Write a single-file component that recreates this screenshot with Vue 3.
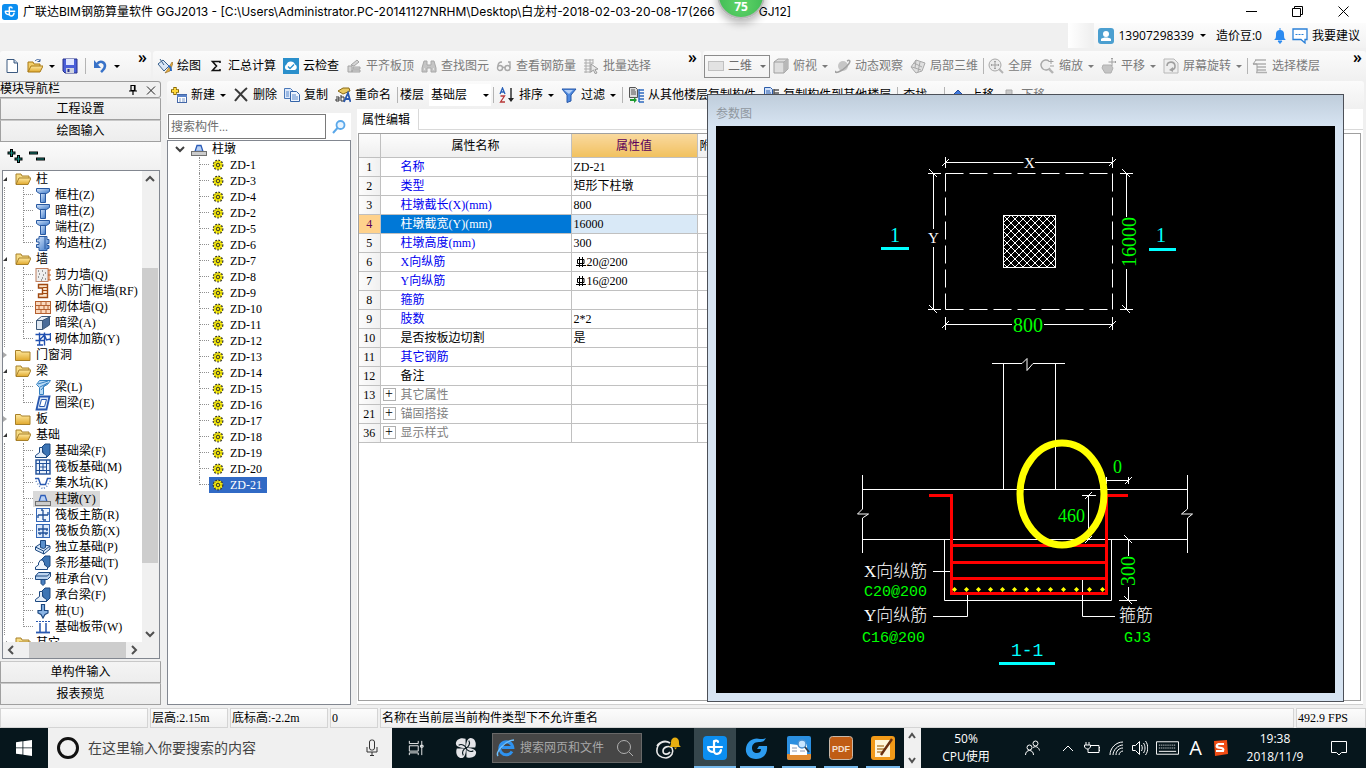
<script setup>
import { ref } from 'vue'

const quickTools = [
  { icon: 'new' },
  { icon: 'open', arrow: true },
  { icon: 'save', sep: true },
  { icon: 'undo', arrow: true }
]

const editTools = [
  { icon: 'paint', label: '绘图' },
  { icon: 'sigma', label: '汇总计算' },
  { icon: 'cloud', label: '云检查' },
  { icon: 'align', label: '平齐板顶', off: true },
  { icon: 'binoculars', label: '查找图元', off: true },
  { icon: 'glasses', label: '查看钢筋量', off: true },
  { icon: 'batch', label: '批量选择', off: true }
]

const viewTools = [
  { icon: 'cube', label: '俯视', arrow: true },
  { icon: 'orbit', label: '动态观察' },
  { icon: 'local3d', label: '局部三维', sep: true },
  { icon: 'full', label: '全屏' },
  { icon: 'zoom', label: '缩放', arrow: true },
  { icon: 'pan', label: '平移', arrow: true },
  { icon: 'rotate', label: '屏幕旋转', arrow: true, sep: true },
  { icon: 'floors', label: '选择楼层' }
]

const componentTools = [
  { icon: 'add', label: '新建', arrow: true },
  { icon: 'delete', label: '删除' },
  { icon: 'copy', label: '复制' },
  { icon: 'rename', label: '重命名', sep: true }
]

const listTools = [
  { icon: 'sort', label: '排序', arrow: true },
  { icon: 'filter', label: '过滤', arrow: true, sep: true },
  { icon: 'copyfrom', label: '从其他楼层复制构件' },
  { icon: 'copyto', label: '复制构件到其他楼层', sep: true },
  { label: '查找', arrow: true, sep: true },
  { icon: 'up', label: '上移' },
  { icon: 'down', label: '下移', off: true }
]

const modules = ref([
  {
    name: '柱', open: true, items: [
      { icon: 'col', name: '框柱(Z)' },
      { icon: 'col', name: '暗柱(Z)' },
      { icon: 'col', name: '端柱(Z)' },
      { icon: 'gzz', name: '构造柱(Z)' }
    ]
  },
  {
    name: '墙', open: true, items: [
      { icon: 'shear', name: '剪力墙(Q)' },
      { icon: 'doorwall', name: '人防门框墙(RF)' },
      { icon: 'brick', name: '砌体墙(Q)' },
      { icon: 'hidbeam', name: '暗梁(A)' },
      { icon: 'brickbar', name: '砌体加筋(Y)' }
    ]
  },
  { name: '门窗洞', open: false, items: [] },
  {
    name: '梁', open: true, items: [
      { icon: 'beam', name: '梁(L)' },
      { icon: 'ring', name: '圈梁(E)' }
    ]
  },
  { name: '板', open: false, items: [] },
  {
    name: '基础', open: true, items: [
      { icon: 'fbeam', name: '基础梁(F)' },
      { icon: 'raft', name: '筏板基础(M)' },
      { icon: 'pit', name: '集水坑(K)' },
      { icon: 'pier', name: '柱墩(Y)' },
      { icon: 'mainbar', name: '筏板主筋(R)' },
      { icon: 'negbar', name: '筏板负筋(X)' },
      { icon: 'isolated', name: '独立基础(P)' },
      { icon: 'strip', name: '条形基础(T)' },
      { icon: 'cap', name: '桩承台(V)' },
      { icon: 'fbeam', name: '承台梁(F)' },
      { icon: 'pile', name: '桩(U)' },
      { icon: 'band', name: '基础板带(W)' }
    ]
  },
  { name: '其它', open: true, items: [] }
])
const activeModule = ref('柱墩(Y)')

const components = [1, 3, 4, 2, 5, 6, 7, 8, 9, 10, 11, 12, 13, 14, 15, 16, 17, 18, 19, 20, 21].map((n) => 'ZD-' + n)
const activeComponent = ref('ZD-21')

const rows = [
  { no: 1, name: '名称', value: 'ZD-21', kind: 'key' },
  { no: 2, name: '类型', value: '矩形下柱墩', kind: 'key' },
  { no: 3, name: '柱墩截长(X)(mm)', value: '800', kind: 'key' },
  { no: 4, name: '柱墩截宽(Y)(mm)', value: '16000', kind: 'key' },
  { no: 5, name: '柱墩高度(mm)', value: '300', kind: 'key' },
  { no: 6, name: 'X向纵筋', value: '20@200', rebar: true, kind: 'key' },
  { no: 7, name: 'Y向纵筋', value: '16@200', rebar: true, kind: 'key' },
  { no: 8, name: '箍筋', value: '', kind: 'key' },
  { no: 9, name: '肢数', value: '2*2', kind: 'key' },
  { no: 10, name: '是否按板边切割', value: '是', kind: 'plain' },
  { no: 11, name: '其它钢筋', value: '', kind: 'key' },
  { no: 12, name: '备注', value: '', kind: 'plain' },
  { no: 13, name: '其它属性', value: '', kind: 'group' },
  { no: 21, name: '锚固搭接', value: '', kind: 'group' },
  { no: 36, name: '显示样式', value: '', kind: 'group' }
]
const activeRow = ref(4)

const rebarDots = [954, 966, 978, 990, 1002, 1014, 1026, 1038, 1050, 1063, 1076, 1089, 1102]

const taskApps = [
  { icon: 'ggj', active: true, title: '广联达' },
  { icon: 'gbrowser', title: '浏览器' },
  { icon: 'reader', title: '阅读器' },
  { icon: 'pdf', title: 'PDF' },
  { icon: 'notes', title: '便签' }
]
</script>

<template>
  <svg class="sprite" aria-hidden="true">
    <defs>
      <linearGradient id="gBlue" x1="0" y1="0" x2="1" y2="1"><stop offset="0" stop-color="#d6e6fb" /><stop offset="1" stop-color="#3c78c8" /></linearGradient>
      <linearGradient id="gFolder" x1="0" y1="0" x2="0" y2="1"><stop offset="0" stop-color="#ffe9a0" /><stop offset="1" stop-color="#e0a82c" /></linearGradient>
    </defs>
    <symbol id="i-ggj" viewBox="0 0 24 24"><rect width="24" height="24" rx="4" fill="#0c8ef0" /><path d="M11 5v10c0 4 6 4 7-1M11 7c0-3 4-3 4-1M5 11h14M5 11c0 3 2 5 6 5" fill="none" stroke="#fff" stroke-width="2.200" stroke-linecap="round" /></symbol>
    <symbol id="i-new" viewBox="0 0 16 16"><path d="M3 1.500h7l3.500 3.500v9.500H3z" fill="#fff" stroke="#3c5a80" /><path d="M10 1.500V5h3.500" fill="#c4d4e8" stroke="#3c5a80" /></symbol>
    <symbol id="i-open" viewBox="0 0 16 16"><path d="M1 14V4h5l1 2h6v3" fill="#f3cf6a" stroke="#a87814" /><path d="M1 14l3-6h12l-3 6z" fill="url(#gFolder)" stroke="#a87814" /><path d="M8 3c2-2 4-2 5 0m0-2v2.500h-2.500" fill="none" stroke="#3a5f9a" /></symbol>
    <symbol id="i-save" viewBox="0 0 16 16"><path d="M1 1h14v14H3l-2-2z" fill="#4a5fd8" stroke="#26308a" /><path d="M4 1h8v6H4z" fill="#dfe6ff" /><path d="M4 10h8v5H4z" fill="#d0d4e0" /><path d="M5.500 11h2v3h-2z" fill="#26308a" /></symbol>
    <symbol id="i-undo" viewBox="0 0 16 16"><path d="M5 6c3-4 8-2 8 2 0 3-2 4-4 6" fill="none" stroke="#3872c8" stroke-width="2.600" /><path d="M2 2v8h7z" fill="#3872c8" /></symbol>
    <symbol id="i-paint" viewBox="0 0 16 16"><path d="M1 6l5-4 6 6-5 5z" fill="#dbe7f6" stroke="#38608c" /><path d="M3 1l4 6" stroke="#38608c" fill="none" /><path d="M15 4l-4 7-3 4 5-2 3-8z" fill="#e8b040" stroke="#8a6018" stroke-width=".6" /><path d="M11 8c2 0 3 2 3 5" stroke="#2868c0" stroke-width="2" fill="none" /></symbol>
    <symbol id="i-sigma" viewBox="0 0 16 16"><path d="M12 5V3.500H4.500L8.500 8l-4 4.500H12V11" fill="none" stroke="#111" stroke-width="1.600" /></symbol>
    <symbol id="i-cloud" viewBox="0 0 16 16"><rect width="16" height="16" fill="#2a8fcb" /><path d="M4 12a3 3 0 0 1-.5-5.500 4.500 4.500 0 0 1 8.500 0A3 3 0 0 1 12 12z" fill="#fff" /><path d="M5 8.500l2 2 4-4" fill="none" stroke="#2a8fcb" stroke-width="1.300" /></symbol>
    <symbol id="i-align" viewBox="0 0 16 16"><path d="M5 7l6-5 2 2-5 4zM2 8h4v6H2zM7 9h7v2H7zM6 12h8v2H6z" fill="#d4d4d4" stroke="#a4a4a4" /></symbol>
    <symbol id="i-binoculars" viewBox="0 0 16 16"><path d="M3 3h3v4h4V3h3l2 7v4h-5v-4H6v4H1v-4z" fill="#c4c4c4" stroke="#a8a8a8" /><path d="M3 11h1M12 11h1" stroke="#fff" /></symbol>
    <symbol id="i-glasses" viewBox="0 0 16 16"><g fill="none" stroke="#a8a8a8" stroke-width="1.400"><circle cx="4" cy="10" r="2.500" /><circle cx="11.500" cy="10" r="2.500" /><path d="M2 8c0-3 2-4 4-4M6.500 10c1-1 1.500-1 2.500 0M14 10V4h-2" /></g></symbol>
    <symbol id="i-batch" viewBox="0 0 16 16"><path d="M1 2h9M1 5h9M1 8h7M1 11h7M1 14h7M3 1v14M7 1v14M10 1v5" stroke="#adadad" fill="none" /><path d="M8 6l7 5-3 .5 2 3.500-2 .5-1.500-3.500L8 14z" fill="#e8e8e8" stroke="#9c9c9c" /></symbol>
    <symbol id="i-flat" viewBox="0 0 16 16"><rect x=".5" y="3.500" width="15" height="9" fill="#e2e2e2" stroke="#c0c0c0" /></symbol>
    <symbol id="i-cube" viewBox="0 0 16 16"><path d="M1 4l4-3h10v10l-4 4H1z" fill="#dedede" stroke="#a0a0a0" /><path d="M1 4h10v11M11 4l4-3" stroke="#a0a0a0" fill="none" /><path d="M11 4l4-3v10l-4 4z" fill="#b8b8b8" /></symbol>
    <symbol id="i-orbit" viewBox="0 0 16 16"><circle cx="8" cy="8" r="5" fill="#c6c6c6" /><path d="M1 13c-2 3 5 1 10-4s5-8 1-6" fill="none" stroke="#a0a0a0" stroke-width="1.500" /></symbol>
    <symbol id="i-local3d" viewBox="0 0 16 16"><path d="M1 9l5-7 9 3-3 8-6 2z" fill="#e0e0e0" stroke="#a8a8a8" /><path d="M4 5l8 4M6 2l-1 8M10 4l-2 10M2 9l9 3" stroke="#a8a8a8" fill="none" /></symbol>
    <symbol id="i-full" viewBox="0 0 16 16"><circle cx="7" cy="7" r="6" fill="#ececec" stroke="#a8a8a8" /><path d="M7 3v8M3 7h8M6 4l1-1 1 1M6 10l1 1 1-1M4 6L3 7l1 1M10 6l1 1-1 1" stroke="#a0a0a0" fill="none" /><path d="M11 11l4 4" stroke="#b4b4b4" stroke-width="2" /></symbol>
    <symbol id="i-zoom" viewBox="0 0 16 16"><path d="M10 3a5 5 0 1 0 1 7" fill="#eee" stroke="#a8a8a8" stroke-width="1.400" /><path d="M12 1v5M9.500 3.500h5M11 8h4" stroke="#a0a0a0" /><path d="M10 11l4 4" stroke="#b4b4b4" stroke-width="2.400" /></symbol>
    <symbol id="i-pan" viewBox="0 0 16 16"><path d="M2 7h8l2 3-2 5H4l-3-5z" fill="#c4c4c4" stroke="#b0b0b0" /><path d="M11 0v8M7.500 4h7M10 1l1-1 1 1M14 3l1 1-1 1" stroke="#a0a0a0" fill="none" /></symbol>
    <symbol id="i-rotate" viewBox="0 0 16 16"><path d="M1 1h10l4 4v10H1z" fill="#eee" stroke="#b8b8b8" /><path d="M4 8a4 4 0 1 1 5 4" stroke="#a0a0a0" stroke-width="1.600" fill="none" /><path d="M6 12l4-3v5z" fill="#a0a0a0" /></symbol>
    <symbol id="i-floors" viewBox="0 0 16 16"><path d="M3 2h11M1 6h4M5 6h9M5 9h9M5 12h9M4 14.500h11" stroke="#b0b0b0" stroke-width="1.500" /><path d="M4 2L1 6h4v8" stroke="#a0a0a0" fill="none" /></symbol>
    <symbol id="i-add" viewBox="0 0 16 16"><path d="M4 0v8M0 4h8" stroke="#8a6a00" stroke-width="3.400" /><path d="M4 1v6M1 4h6" stroke="#ffd83c" stroke-width="2" /><rect x="6.500" y="7.500" width="9" height="8" fill="#fff" stroke="#4468a8" /><path d="M6 8h10v2H6z" fill="#5b83c8" /><path d="M8 12h2m1 0h3m-6 2h2m1 0h3" stroke="#7a98c8" /></symbol>
    <symbol id="i-delete" viewBox="0 0 16 16"><path d="M2 2c4 3 8 8 12 12M14 1C9 5 6 9 2 14" stroke="#3a3a3a" stroke-width="2" fill="none" /></symbol>
    <symbol id="i-copy" viewBox="0 0 16 16"><path d="M.5 1.500h6l2 2v8h-8z" fill="#dce8fa" stroke="#4a78b8" /><path d="M6.500 4.500h6l3 3v7h-9z" fill="#eef4fd" stroke="#3464a8" /><path d="M2 5h3M2 7h3M2 9h3M8 8h4M8 10h6M8 12h6" stroke="#5a8acc" /></symbol>
    <symbol id="i-rename" viewBox="0 0 16 16"><path d="M3 4l5-3h6l1 3-7 3z" fill="#e8c860" stroke="#8a6a18" /><path d="M1 10h3v4H1v-2h3M6 8v6h3v-4H6" fill="none" stroke="#333" /><path d="M9 15l4-9 2.500 9M10.500 12h4" fill="none" stroke="#2858b0" stroke-width="1.800" /></symbol>
    <symbol id="i-sort" viewBox="0 0 16 16"><path d="M1 7l2.500-6L6 7M2 5h3" stroke="#2860b8" fill="none" stroke-width="1.300" /><path d="M1.500 9h4l-4 6H6" stroke="#b83838" fill="none" stroke-width="1.300" /><path d="M12 1v12" stroke="#222" stroke-width="1.400" /><path d="M9 11h6l-3 4z" fill="#222" /></symbol>
    <symbol id="i-filter" viewBox="0 0 16 16"><path d="M1 2h14L10 8v6l-4 1.500V8z" fill="#4e8ae0" stroke="#2858a8" /><path d="M3 3h9L8 7z" fill="#b4d0f8" /></symbol>
    <symbol id="i-copyfrom" viewBox="0 0 16 16"><path d="M1.500.5h6l2 2v8h-8z" fill="#ddd" stroke="#555" /><path d="M3 3h4M3 5h5M3 7h5" stroke="#555" /><path d="M11 2v13M11 3h5M11 6h5M11 9h5M11 12h5M11 15h5" stroke="#2f6bc0" stroke-width="1.500" /><path d="M2 12h4v-2l3 3-3 3v-2H2z" fill="#1d9a30" /></symbol>
    <symbol id="i-copyto" viewBox="0 0 16 16"><path d="M1.500.5h6l2 2v10h-8z" fill="#cfe0fa" stroke="#2c5ca8" /><path d="M3 4h4M3 6h5M3 8h5" stroke="#2c5ca8" /><path d="M11 2v13M11 3h5M11 6h5M11 9h5" stroke="#555" stroke-width="1.500" /></symbol>
    <symbol id="i-up" viewBox="0 0 16 16"><path d="M8 3l6 6h-3v5H5V9H2z" fill="#3f78dc" stroke="#244c9c" /></symbol>
    <symbol id="i-down" viewBox="0 0 16 16"><path d="M8 14l6-6h-3V3H5v5H2z" fill="#c8c8c8" stroke="#aaa" /></symbol>
    <symbol id="i-folder-open" viewBox="0 0 16 16"><path d="M1 13V3h5l1 2h7v3" fill="#f6dc86" stroke="#a88028" /><path d="M1 13.500L4 7h12l-3 6.500z" fill="url(#gFolder)" stroke="#a88028" /></symbol>
    <symbol id="i-folder" viewBox="0 0 16 16"><path d="M.5 13.500V3.500h5l1 1.500h8.500v8.500z" fill="url(#gFolder)" stroke="#a88028" /></symbol>
    <symbol id="i-col" viewBox="0 0 16 16"><path d="M1.500 1.500h13v3l-3 2h-7l-3-2z" fill="url(#gBlue)" stroke="#2858a0" /><path d="M5.500 6.500h5v9h-5z" fill="url(#gBlue)" stroke="#2858a0" /></symbol>
    <symbol id="i-gzz" viewBox="0 0 16 16"><path d="M4 1.500h8v3h2v4h-2v2h2v3h-2v2H4v-3H1.500v-3H4V7H1.500V4H4z" fill="url(#gBlue)" stroke="#2858a0" /><path d="M10 2v12" stroke="#2858a0" /></symbol>
    <symbol id="i-shear" viewBox="0 0 16 16"><rect x="1" y="1.500" width="12" height="13" fill="#eee" stroke="#c08060" /><path d="M3 4h1m3 0h1m2 2h1M4 7h1m3 1h1M3 10h1m3 1h1m2 1h1M6 13h1" stroke="#444" /><path d="M14 3v10M13 3h3M13 8h3M13 13h3" stroke="#c86020" /></symbol>
    <symbol id="i-doorwall" viewBox="0 0 16 16"><path d="M3.500 1.500h9v13h-9v-3.500h4V5h-4z" fill="#fbe4cc" stroke="#a04810" stroke-width="1.400" /><path d="M8 4.500h4M8 7.500h4M8 10.500h4" stroke="#a04810" /></symbol>
    <symbol id="i-brick" viewBox="0 0 16 16"><rect x=".5" y="2.500" width="15" height="12" fill="#fbd9be" stroke="#b46030" /><path d="M1 6.500h14M1 10.500h14M6 3v3M11 3v3M4 7v3M9 7v3M13 7v3M6 11v3M11 11v3" stroke="#b46030" /></symbol>
    <symbol id="i-hidbeam" viewBox="0 0 16 16"><path d="M1.500 5.500l5-4h9l-5 4z" fill="#e8eef6" stroke="#3c5878" /><path d="M1.500 5.500h6v9h-6z" fill="#dfe8f2" stroke="#3c5878" /><path d="M7.500 5.500l7-3.500v8l-7 4.500z" fill="#4a6c98" stroke="#3c5878" /></symbol>
    <symbol id="i-brickbar" viewBox="0 0 16 16"><path d="M.5 3.500h15M.5 9.500h9M4.500 1.500v13M9.500 1.500v13M4.500 9l5-5 2 5 4-1M15.500 2v8M2 14h6" fill="none" stroke="#2050b0" stroke-width="1.400" /></symbol>
    <symbol id="i-beam" viewBox="0 0 16 16"><path d="M1.500 5.500l3-4h11l-3 4-4 2v8h-4v-7z" fill="#b8daf6" stroke="#3480c0" /><path d="M3 5l10-3M5 8l8-4M6 11l6-7" stroke="#3480c0" /></symbol>
    <symbol id="i-ring" viewBox="0 0 16 16"><path d="M4.500 1.500h10l-3 13h-10z" fill="#dce8f8" stroke="#2858b0" stroke-width="1.800" /><path d="M6.500 4.500h5l-2 7h-5z" fill="#fff" stroke="#2858b0" /></symbol>
    <symbol id="i-fbeam" viewBox="0 0 16 16"><path d="M6 5l4-4h5v10l-4 4z" fill="#3c74b4" stroke="#1c4880" /><path d="M.5 14.500v-2l4-3V4.500h3v5l4 3v2z" fill="#e4eefa" stroke="#1c4880" /></symbol>
    <symbol id="i-raft" viewBox="0 0 16 16"><rect x="1" y="1" width="14" height="14" fill="#eaf2fc" stroke="#1f4f98" stroke-width="1.400" /><path d="M4.500 1v14M8 4v8M11.500 1v14M1 4.500h14M4 8h8M1 11.500h14" stroke="#1f4f98" /></symbol>
    <symbol id="i-pit" viewBox="0 0 16 16"><path d="M0 3.500h3.500l2 6h5l2-6H16" fill="none" stroke="#2858b0" stroke-width="1.400" /><path d="M1 6l3 5 4 3 4-3 3-5" fill="none" stroke="#5a80c0" stroke-width="1.500" stroke-dasharray="1 2" /></symbol>
    <symbol id="i-pier" viewBox="0 0 16 16"><path d="M6 4.500h4l2 6H4z" fill="#b8d0f4" stroke="#2c5cb8" stroke-width="1.300" /><rect x=".5" y="10.500" width="15" height="4" fill="#ccc" stroke="#707070" /></symbol>
    <symbol id="i-mainbar" viewBox="0 0 16 16"><rect x="1.500" y="1.500" width="13" height="13" fill="#f0f6fe" stroke="#3468b8" /><path d="M8 3v10M3 8h10M3 8v3M13 8V5M8 3H6M8 13h3" stroke="#1f4f98" fill="none" stroke-width="1.300" /></symbol>
    <symbol id="i-negbar" viewBox="0 0 16 16"><rect x="1.500" y="1.500" width="13" height="13" fill="#dce9fa" stroke="#3468b8" /><path d="M8 2v12M3 6h10M3 10h10M4 6v2M12 6v2M5 10v2M11 10v2" stroke="#1f4f98" fill="none" stroke-width="1.300" /></symbol>
    <symbol id="i-isolated" viewBox="0 0 16 16"><path d="M.5 8L5 5l10 2v3l-6 5-8.500-4z" fill="#d6e6f8" stroke="#1c4880" /><path d="M5.500 1.500h5v7l-2 1-3-1z" fill="#5a90cc" stroke="#1c4880" /><path d="M.5 8l8 4 6.500-5M8.500 12v3" stroke="#1c4880" fill="none" /></symbol>
    <symbol id="i-strip" viewBox="0 0 16 16"><path d="M6 5l4-4h5v10l-4 3z" fill="#3c74b4" stroke="#1c4880" /><path d="M.5 14.500V12l3-2V8l2-3h2l2 3v2l3 2v2.500z" fill="#eef4fc" stroke="#1c4880" /></symbol>
    <symbol id="i-cap" viewBox="0 0 16 16"><path d="M.5 5l3-3.500h12v4l-3 3H.5z" fill="#bcd4f0" stroke="#1c4880" /><path d="M.5 5h12l3-3.500" fill="none" stroke="#1c4880" /><path d="M6 8.500h4v4l-2 2-2-2z" fill="#4a80c0" stroke="#1c4880" /></symbol>
    <symbol id="i-pile" viewBox="0 0 16 16"><path d="M6.500 1.500h3v6H13v2.500l-3 1.500L8 15l-2-3.500L3 10V7.500h3.500z" fill="#8ab4e4" stroke="#1c4880" stroke-width="1.200" /></symbol>
    <symbol id="i-band" viewBox="0 0 16 16"><path d="M1 2.500h14" stroke="#2858b0" stroke-dasharray="2 1" /><path d="M1 13.500h14" stroke="#2858b0" stroke-width="1.800" /><path d="M5 4v9M11 4v9" stroke="#2858b0" stroke-width="1.500" /></symbol>
    <symbol id="i-gear" viewBox="0 0 12 12"><circle cx="6" cy="6" r="4.800" fill="#fff200" stroke="#333" stroke-width="1.200" stroke-dasharray="1.800 1.400" /><path d="M6 2v8M2 6h8M3.200 3.200l5.600 5.600M8.800 3.200L3.200 8.800" stroke="#555" stroke-width=".5" /><circle cx="6" cy="6" r="1.600" fill="#fff200" stroke="#222" stroke-width=".8" /></symbol>
    <symbol id="i-rebar" viewBox="0 0 12 12"><path d="M4.500 1v10M7.500 1v10M4.500 3.500h-2v4h6.500v-4H4.500M1 9.500h10" fill="none" stroke="#000" /></symbol>
    <symbol id="i-gbrowser" viewBox="0 0 24 24"><path d="M21 2c-2 4-4 4-7 4-5 0-7 3-7 6s2 5 5 5c2 0 4-1 4-4h-4l2-3h8c1 8-4 13-11 13C4 23 0 18 1 12 2 5 9 1 15 3c3 0 4 0 6-1z" fill="#2c9cf0" /></symbol>
    <symbol id="i-reader" viewBox="0 0 24 24"><rect width="24" height="24" rx="2" fill="#2b8fe0" /><path d="M0 18h24v4a2 2 0 0 1-2 2H2a2 2 0 0 1-2-2z" fill="#e08a30" /><path d="M3 8l8 1 9-1v11H3z" fill="#fff" /><path d="M5 12h5M5 15h5M13 15h5" stroke="#8a98b0" /><circle cx="15" cy="8" r="4" fill="#c8e6ff" stroke="#4a90d0" stroke-width="1.500" /><path d="M18 11l4 5" stroke="#345" stroke-width="2" /></symbol>
    <symbol id="i-pdf" viewBox="0 0 24 24"><rect x=".5" y=".5" width="23" height="23" rx="3" fill="#c05c14" stroke="#c8b8a8" /><text x="12" y="16" text-anchor="middle" font-family="Liberation Sans" font-weight="bold" font-size="9" fill="#f4e0d0">PDF</text></symbol>
    <symbol id="i-notes" viewBox="0 0 24 24"><rect width="24" height="24" rx="3" fill="#f29a18" /><rect x="4" y="4" width="15" height="17" fill="#fff7dc" /><path d="M6 10h7M6 13h8M6 16h6" stroke="#b88840" stroke-width="1.500" /><path d="M21 3l-9 13-2 3" stroke="#6a3010" stroke-width="2.400" /></symbol>
  </svg>

  <div class="app">
    <header class="titlebar">
      <svg class="logo"><use href="#i-ggj" /></svg>
      <h1>
        <span>广联达BIM钢筋算量软件 GGJ2013 - [C:\Users\Administrator.PC-20141127NRHM\Desktop\白龙村-2018-02-03-20-08-17(266</span>
        <span>GJ12]</span>
      </h1>
      <div class="window-buttons">
        <button aria-label="最小化"><svg viewBox="0 0 11 11"><path d="M0 5.500h11" /></svg></button>
        <button aria-label="还原"><svg viewBox="0 0 11 11"><path d="M.5 2.500h8v8h-8zM2.500 2.500v-2h8v8h-2" /></svg></button>
        <button aria-label="关闭"><svg viewBox="0 0 11 11"><path d="M.5.5l10 10M10.500.5l-10 10" /></svg></button>
      </div>
      <div class="speed-ball">75</div>
    </header>

    <div class="account-row">
      <div class="account-stub"></div>
      <div class="account">
        <svg class="ico" viewBox="0 0 16 16"><rect width="16" height="16" rx="3" fill="#4b9fd0" /><circle cx="8" cy="6" r="3" fill="#fff" /><path d="M3 13v-2c2-2 8-2 10 0v2z" fill="#fff" /></svg>
        <button class="account-name">13907298339<i class="caret"></i></button>
        <span class="beans">造价豆:0</span>
        <svg class="ico" viewBox="0 0 16 16"><path d="M2 12c2-1 2-3 2-6a4 4 0 0 1 8 0c0 3 0 5 2 6z" fill="#2b8af0" /><path d="M8 0v3M6 13h4l-2 2.500z" fill="#2b8af0" stroke="#2b8af0" /></svg>
        <svg class="ico" viewBox="0 0 16 16"><path d="M1 1h14v10.500h-2V15l-4-3.500H1z" fill="#fff" stroke="#2a80d8" stroke-width="1.300" /><path d="M3.500 6.500h9" stroke="#2a80d8" stroke-dasharray="2 1" /></svg>
        <button>我要建议</button>
      </div>
    </div>

    <nav class="toolbars">
      <div class="bar bar-quick">
        <template v-for="t in quickTools" :key="t.icon">
          <button class="tool" :aria-label="t.icon"><svg class="ico"><use :href="'#i-' + t.icon" /></svg><i v-if="t.arrow" class="caret"></i></button>
          <span v-if="t.sep" class="sep"></span>
        </template>
        <button class="more">»</button>
      </div>
      <div class="bar bar-edit">
        <button v-for="t in editTools" :key="t.label" class="tool" :class="{ off: t.off }"><svg class="ico"><use :href="'#i-' + t.icon" /></svg>{{ t.label }}</button>
        <button class="more">»</button>
      </div>
      <div class="bar bar-view">
        <label class="mode">
          <svg class="ico"><use href="#i-flat" /></svg>
          <select aria-label="视图"><option>二维</option><option>三维</option></select>
          <i class="caret"></i>
        </label>
        <template v-for="t in viewTools" :key="t.label">
          <button class="tool off"><svg class="ico"><use :href="'#i-' + t.icon" /></svg>{{ t.label }}<i v-if="t.arrow" class="caret"></i></button>
          <span v-if="t.sep" class="sep"></span>
        </template>
        <button class="more">»</button>
      </div>
    </nav>

    <main class="workspace">
      <aside class="sidebar">
        <div class="side-title">
          <span>模块导航栏</span>
          <svg viewBox="0 0 10 12"><path d="M3 1.500h4v5H3zM1 7h8M5 7v4M6.500 1.500v5" fill="none" stroke="#000" stroke-width="1.200" /></svg>
          <svg viewBox="0 0 10 12"><path d="M1 2.500l8 8M9 2.500l-8 8" fill="none" stroke="#222" /></svg>
        </div>
        <button class="side-button">工程设置</button>
        <button class="side-button">绘图输入</button>
        <div class="side-tools">
          <button aria-label="展开"><svg viewBox="0 0 16 16"><path d="M4.500 1v8M.5 5h8M11.500 7v8M7.500 11h8" stroke="#000" stroke-width="3" /><path d="M4.500 2v6M1.500 5h6M11.500 8v6M8.500 11h6" stroke="#1a8a80" /></svg></button>
          <button aria-label="折叠"><svg viewBox="0 0 16 16"><path d="M0 5h9M7 11h9" stroke="#000" stroke-width="3" /><path d="M1 5h7M8 11h7" stroke="#1a8a80" /></svg></button>
        </div>
        <div class="tree-box">
          <div class="tree-main">
            <ul class="tree">
              <li v-for="g in modules" :key="g.name">
                <div class="branch" @click="g.open = !g.open">
                  <i class="fold" :class="{ open: g.open }"></i>
                  <svg class="ico"><use :href="g.open ? '#i-folder-open' : '#i-folder'" /></svg>
                  <span>{{ g.name }}</span>
                </div>
                <div v-if="g.open" class="leaves">
                  <ul>
                    <li v-for="m in g.items" :key="m.name" class="leaf" @click="activeModule = m.name">
                      <div class="leaf-label" :class="{ active: m.name === activeModule }">
                        <svg class="ico"><use :href="'#i-' + m.icon" /></svg>
                        <span>{{ m.name }}</span>
                      </div>
                    </li>
                  </ul>
                </div>
              </li>
            </ul>
            <div class="vscroll">
              <svg viewBox="0 0 16 16"><path d="M4 10l4-4 4 4" /></svg>
              <i class="before"></i><i class="thumb"></i><i class="after"></i>
              <svg viewBox="0 0 16 16"><path d="M4 6l4 4 4-4" /></svg>
            </div>
          </div>
          <div class="hscroll">
            <svg viewBox="0 0 16 16"><path d="M10 4L6 8l4 4" /></svg>
            <i class="thumb"></i>
            <svg viewBox="0 0 16 16"><path d="M6 4l4 4-4 4" /></svg>
          </div>
        </div>
        <button class="side-button">单构件输入</button>
        <button class="side-button">报表预览</button>
      </aside>

      <section class="content">
        <div class="bar bar-component">
          <template v-for="t in componentTools" :key="t.label">
            <button class="tool"><svg class="ico"><use :href="'#i-' + t.icon" /></svg>{{ t.label }}<i v-if="t.arrow" class="caret"></i></button>
            <span v-if="t.sep" class="sep"></span>
          </template>
          <label class="floor">楼层
            <span class="floor-box">
              <select><option>基础层</option><option>首层</option></select>
              <i class="caret"></i>
            </span>
          </label>
          <span class="sep"></span>
          <template v-for="t in listTools" :key="t.label">
            <button class="tool" :class="{ off: t.off }"><svg v-if="t.icon" class="ico"><use :href="'#i-' + t.icon" /></svg>{{ t.label }}<i v-if="t.arrow" class="caret"></i></button>
            <span v-if="t.sep" class="sep"></span>
          </template>
        </div>

        <div class="panels">
          <section class="component-panel">
            <div class="search">
              <input type="text" placeholder="搜索构件..." aria-label="搜索构件">
              <button aria-label="搜索"><svg viewBox="0 0 16 16"><circle cx="9.500" cy="6" r="4" fill="#e8f4ff" stroke="#5aa8ea" stroke-width="1.800" /><path d="M6.500 9L2 14" stroke="#5aa8ea" stroke-width="2" /></svg></button>
            </div>
            <div class="component-tree">
              <div class="component-root">
                <svg class="chev" viewBox="0 0 10 10"><path d="M1 3l4 4 4-4" /></svg>
                <svg class="ico"><use href="#i-pier" /></svg>
                <span>柱墩</span>
              </div>
              <ul>
                <li v-for="c in components" :key="c" class="component" @click="activeComponent = c">
                  <div class="component-label" :class="{ active: c === activeComponent }">
                    <svg><use href="#i-gear" /></svg>
                    <span>{{ c }}</span>
                  </div>
                </li>
              </ul>
            </div>
          </section>

          <section class="attr-panel">
            <div class="tabs"><button class="tab">属性编辑</button></div>
            <div class="sheet">
              <table>
                <colgroup><col class="c-no"><col class="c-name"><col class="c-value"><col class="c-extra"></colgroup>
                <thead>
                  <tr><th></th><th>属性名称</th><th class="hot">属性值</th><th class="extra">附加</th></tr>
                </thead>
                <tbody>
                  <tr v-for="r in rows" :key="r.no" :class="[r.kind, { active: r.no === activeRow }]" @click="activeRow = r.no">
                    <th scope="row">{{ r.no }}</th>
                    <td class="name"><button v-if="r.kind === 'group'" class="expand" aria-label="展开">+</button><span>{{ r.name }}</span></td>
                    <td class="value"><svg v-if="r.rebar" class="rebar"><use href="#i-rebar" /></svg>{{ r.value }}</td>
                    <td></td>
                  </tr>
                </tbody>
              </table>
            </div>
          </section>
        </div>
      </section>
    </main>

    <footer class="status">
      <span class="st-empty"></span>
      <span class="st-height">层高:2.15m</span>
      <span class="st-base">底标高:-2.2m</span>
      <span class="st-count">0</span>
      <span class="st-msg">名称在当前层当前构件类型下不允许重名</span>
      <span class="st-fps">492.9 FPS</span>
    </footer>

    <div class="taskbar">
      <button class="start" aria-label="开始"><svg viewBox="0 0 16 16"><path d="M0 2.200L6.500 1.300v6.200H0zM7.300 1.200L16 0v7.500H7.300zM0 8.300h6.500v6.300L0 13.800zM7.300 8.300H16V16l-8.700-1.200z" fill="#fff" /></svg></button>
      <label class="cortana">
        <i class="ring"></i>
        <input type="text" placeholder="在这里输入你要搜索的内容" aria-label="搜索">
        <svg viewBox="0 0 12 18"><rect x="3.500" y="1" width="5" height="10" rx="2" /><path d="M1 8v5h10V8M6 13v4M4 16.500h4" /></svg>
      </label>
      <button class="task" aria-label="任务视图"><svg class="line" viewBox="0 0 18 18"><path d="M1.500 1v3h10V1M1.500 6.500h10v6h-10zM1.500 17v-2.500h10V17M15.500 1v16M14 6h3v2h-3z" /></svg></button>
      <button class="task wide" aria-label="应用"><svg viewBox="0 0 24 24"><g fill="#e4e4e8"><path d="M11.500 12V2C6 0 1 3 1 7c0 3 4 5 10.500 5z" /><path d="M12 11.500h10c2-6-1-10.500-5-10.500-3 0-5 4-5 10.500z" /><path d="M12.500 12v10c6 2 10.500-1 10.500-5 0-3-4-5-10.500-5z" /><path d="M12 12.500H2C0 18 3 23 7 23c3 0 5-4 5-10.500z" /></g><path d="M4 9c3-2 7 0 8 3M15 4c2 3 0 7-3 8M20 15c-3 2-7 0-8-3M9 20c-2-3 0-7 3-8" fill="none" stroke="#06161c" stroke-width="1.200" /></svg></button>
      <label class="iebox">
        <svg class="ie" viewBox="0 0 20 20"><path d="M16 13.500a6.500 6.500 0 1 1 .8-4H6" fill="none" stroke="#2f92ee" stroke-width="3" /><path d="M2 18C-1 14 10 2 18 2" fill="none" stroke="#6cc0ff" stroke-width="1.500" /></svg>
        <input type="text" placeholder="搜索网页和文件" aria-label="搜索网页和文件">
        <svg class="lens" viewBox="0 0 18 18"><circle cx="8" cy="8" r="6.500" /><path d="M13 13l4 4" /></svg>
      </label>
      <button class="task wide bell" aria-label="通知"><svg viewBox="0 0 28 26"><path d="M16 8c-6-3-12 0-13 6s4 9 9 9c6-1 8-6 6-10-3-3-9-1-9 3s5 4 7 1M3 11c3-5 9-6 13-3" fill="none" stroke="#e8e8e8" stroke-width="1.600" /><path d="M15 12c2-1 2-3 2-5 0-6 8-6 8 0 0 2 0 4 2 5zM20 12.500h3l-1.500 2z" fill="#e8ae10" /></svg></button>
      <button v-for="a in taskApps" :key="a.icon" class="app-button" :class="{ active: a.active }" :aria-label="a.title"><svg><use :href="'#i-' + a.icon" /></svg></button>
      <div class="task-scroll">
        <svg viewBox="0 0 16 16"><path d="M5 10l3-4 3 4" /></svg>
        <svg viewBox="0 0 16 16"><path d="M5 6l3 4 3-4" /></svg>
      </div>
      <div class="cpu"><span>50%</span><span>CPU使用</span></div>
      <div class="tray">
        <svg class="line people" viewBox="0 0 16 16"><circle cx="11.500" cy="3.500" r="2.500" /><circle cx="5.500" cy="7.500" r="2.500" /><path d="M1.500 15c0-6 8-6 8 0M9 7.500c3-2 6 0 6.500 3" /></svg>
        <svg class="line" viewBox="0 0 16 16"><path d="M3 11l5-5 5 5" /></svg>
        <svg class="line" viewBox="0 0 16 16"><path d="M6 5.500h9v7H4V9M15 7.500h1v3h-1M2 2v3M5 2v3M.5 5h6v2l-2 2h-2l-2-2z" /></svg>
        <svg class="line" viewBox="0 0 16 16"><path d="M2 15C2 8 8 2 15 2M5 15c0-5 5-10 10-10M8 15c0-4 3-7 7-7M11 15c0-2 2-4 4-4" /></svg>
        <svg class="line" viewBox="0 0 16 16"><path d="M.5 5.500h3l4-4v13l-4-4h-3zM9.500 5c1 2 1 4 0 6M11.500 3c2 3 2 7 0 10M13.500 1c3 4 3 10 0 14" /></svg>
        <svg class="line keys" viewBox="0 0 24 14"><path d="M.5.500h23v13H.500zM3 10.500h18" /><path d="M3 4h18M3 7h18" stroke-dasharray="1 1" /></svg>
        <span class="ime">A</span>
        <svg class="sogou" viewBox="0 0 16 16"><path d="M2 1l13-1 1 14-13 2z" fill="#f04c14" /><path d="M12 4H6.500C4 5 4 7.500 7 7.700c4 .3 5 1 4 3.300H4" fill="none" stroke="#fff" stroke-width="2.200" /></svg>
      </div>
      <div class="clock"><time>19:38</time><time>2018/11/9</time></div>
      <button class="notify" aria-label="操作中心"><svg class="line" viewBox="0 0 16 16"><path d="M.5 1.500h15v11h-5L8 15l-2.500-2.500h-5z" /></svg></button>
    </div>

    <!-- floating parameter window -->
    <section class="dialog">
      <h2>参数图</h2>
      <svg class="cad" viewBox="716 126 619 567">
        <defs>
          <pattern id="hatch" x="1003" y="215" width="8" height="8" patternUnits="userSpaceOnUse"><path d="M0 0l8 8M8 0L0 8" stroke="#fff" stroke-width="1" /></pattern>
        </defs>

        <!-- plan -->
        <g class="w">
          <path d="M945.500 173.500h167M945.500 309.500h167" stroke-dasharray="18 6" />
          <path d="M945.500 173.500v136M1112.500 173.500v136" stroke-dasharray="18 6" />
          <rect x="1003.500" y="215.500" width="52" height="52" fill="url(#hatch)" />
          <path d="M945.500 162.500h78M1035 162.500h77.500M945.500 157v11M1112.500 157v11M942 166l7-7M1109 166l7-7" />
          <path d="M945.500 324.500H1012M1044 324.500h68.500M945.500 317v13M1112.500 317v13M942 328l7-7M1109 328l7-7" />
          <path d="M933.500 173.500V229M933.500 247v62.500M928 173.500h13M928 309.500h13M929 169l8 8M929 305l8 8" />
          <path d="M1126.500 173.500V217M1126.500 269v40.500M1120 173.500h13M1120 309.500h13M1122 169l8 8M1122 305l8 8" />
        </g>
        <path class="c" d="M881 248.500h28M1149 249.500h27" />
        <text class="t-white" x="1024" y="168" font-size="15">X</text>
        <text class="t-white" x="928" y="243" font-size="15">Y</text>
        <text class="t-cyan" x="890" y="242" font-size="20">1</text>
        <text class="t-cyan" x="1156" y="242" font-size="20">1</text>
        <text class="t-green" x="1013" y="332" font-size="20">800</text>
        <text class="t-green" transform="translate(1136 267) rotate(-90)" font-size="20">16000</text>

        <!-- section 1-1 -->
        <g class="w">
          <path d="M992 363.500h30l5-5v12l6-7h32M1003.500 363.500v126M1055.500 363.500v126" />
          <path d="M862.500 489.500h325M862.500 539.500h325M862.500 475v34l-5 5h11l-6 4v35M1187.500 475v34l-6 5h11l-5 4v35" />
          <path d="M944.500 539.500v61h167v-61" />
          <path d="M1088.500 495v44M1082 495.500h14M1085 499l7-7M1085 543l7-7" />
          <path d="M1106 480.500h23M1106.500 477v7M1128.500 477v7M1125 484l7-7" />
          <path d="M1128.500 539.500V556M1128.500 587v13.500M1119 600.500h18M1124 535l8 8M1124 596l8 8" />
          <path d="M933 571.500h18M933 616.500h34.500V592M1082.500 580v36.500h32.500" />
        </g>
        <path class="r" d="M929 495.500h22.500v98h155v-98h21.500M951 545.500h155M951 562.500h155M951 578.500h155" />
        <path v-for="x in rebarDots" :key="x" class="y" :d="`M${x + 0.5} 587l2.500 2.500-2.500 2.500-2.500-2.500z`" />
        <ellipse cx="1062" cy="494" rx="42" ry="51" fill="none" stroke="#ff0" stroke-width="7" />
        <path class="c" d="M999 663.500h56" />
        <text class="t-green" x="1113" y="473" font-size="18">0</text>
        <text class="t-green" x="1058" y="522" font-size="18">460</text>
        <text class="t-green" transform="translate(1135 586) rotate(-90)" font-size="20">300</text>
        <text class="t-white" x="864" y="577" font-size="17">X向纵筋</text>
        <text class="t-green mono" x="864" y="596" font-size="15">C20@200</text>
        <text class="t-white" x="864" y="621" font-size="17">Y向纵筋</text>
        <text class="t-green mono" x="862" y="642" font-size="15">C16@200</text>
        <text class="t-white" x="1119" y="621" font-size="17">箍筋</text>
        <text class="t-green mono" x="1124" y="642" font-size="15">GJ3</text>
        <text class="t-cyan mono" x="1011" y="656" font-size="18">1-1</text>
      </svg>
    </section>
  </div>
</template>

<style>
body {
  margin: 0;
  background: #f0f0f0;
}
</style>

<style scoped>
.sprite {
  position: absolute;
  width: 0;
  height: 0;
}

.app {
  --ui: "Open Sans", "Noto Sans CJK SC", sans-serif;
  --song: "Liberation Serif", "Noto Sans CJK SC", serif;
  position: relative;
  display: flex;
  flex-direction: column;
  height: 100vh;
  overflow: hidden;
  font-family: var(--ui);
  font-size: 12px;
  line-height: 16px;
  color: #000;
  background: #f0f0f0;
  white-space: nowrap;
}

button,
input,
select {
  margin: 0;
  padding: 0;
  border: 0;
  background: none;
  font: inherit;
  color: inherit;
}

select {
  appearance: none;
}

ul {
  margin: 0;
  padding: 0;
  list-style: none;
}

svg {
  display: block;
  flex: none;
}

.ico {
  width: 16px;
  height: 16px;
}

.caret {
  width: 0;
  height: 0;
  border: 3px solid transparent;
  border-top-color: currentColor;
  border-bottom: 0;
}

/* title bar */
.titlebar {
  position: relative;
  flex: none;
  display: flex;
  align-items: center;
  gap: 5px;
  height: 23px;
  padding-left: 2px;
  background: #fff;
}

.logo {
  width: 16px;
  height: 16px;
}

.titlebar h1 {
  margin: 0;
  flex: 1;
  display: flex;
  gap: 44px;
  font-family: Inter, "Noto Sans CJK SC", sans-serif;
  font-size: 12px;
  font-weight: 400;
}

.window-buttons {
  display: flex;
}

.window-buttons button {
  width: 46px;
  height: 23px;
  display: flex;
  align-items: center;
  justify-content: center;
}

.window-buttons svg {
  width: 11px;
  height: 11px;
  fill: none;
  stroke: #000;
}

.speed-ball {
  position: absolute;
  left: 717px;
  bottom: 4px;
  box-sizing: border-box;
  width: 48px;
  height: 48px;
  padding-bottom: 4px;
  display: flex;
  align-items: flex-end;
  justify-content: center;
  z-index: 5;
  border: 2px solid #b8b8b8;
  border-radius: 50%;
  background: radial-gradient(circle at 50% 70%, #5fd468, #2fae4a);
  box-shadow: 0 4px 8px rgba(0, 0, 0, 0.3);
  color: #fff;
  font-weight: 700;
  line-height: 12px;
}

/* account */
.account-row {
  flex: none;
  display: flex;
  justify-content: flex-end;
  gap: 3px;
  height: 28px;
}

.account-stub {
  width: 23px;
  height: 25px;
  background: linear-gradient(90deg, #fff, #f0f0f0);
}

.account {
  display: flex;
  align-items: center;
  gap: 4px;
  height: 25px;
  padding: 0 6px 0 4px;
  background: linear-gradient(#fcfcfc, #f2f2f2);
}

.account-name {
  display: flex;
  align-items: center;
  gap: 6px;
}

.beans {
  margin: 0 6px;
}

/* toolbars */
.toolbars {
  flex: none;
  display: flex;
  gap: 2px;
  height: 30px;
}

.bar {
  display: flex;
  align-items: center;
  padding-left: 1px;
  background: linear-gradient(#fbfbfb, #f0f0f0);
  border-radius: 3px;
}

.tool {
  flex: none;
  display: flex;
  align-items: center;
  gap: 4px;
  padding: 0 4px 0 3px;
}

.tool .caret {
  margin-left: 1px;
}

.off {
  color: #7b7b7b;
}

.sep {
  flex: none;
  width: 1px;
  height: 16px;
  margin: 0 1px;
  background: #b4b4b4;
}

.more {
  align-self: flex-start;
  margin-left: auto;
  padding: 0 4px;
  font-size: 16px;
  font-weight: 600;
  line-height: 12px;
}

.bar-quick {
  box-sizing: border-box;
  width: 151px;
}

.bar-quick .tool .caret {
  margin-left: 2px;
}

.bar-quick .sep {
  margin: 0 3px;
}

.bar-edit {
  box-sizing: border-box;
  width: 548px;
}

.bar-view {
  flex: 1;
}

.mode {
  display: flex;
  align-items: center;
  gap: 4px;
  height: 21px;
  padding: 0 3px;
  border: 1px solid #8c8c8c;
  color: #6d6d6d;
}

.mode select {
  width: 28px;
}

/* workspace */
.workspace {
  flex: 1;
  min-height: 0;
  display: flex;
  gap: 6px;
  padding-bottom: 3px;
}

.sidebar {
  flex: none;
  width: 161px;
  display: flex;
  flex-direction: column;
  font-family: var(--song);
}

.side-title {
  display: flex;
  align-items: center;
  gap: 8px;
  height: 15px;
  padding-right: 4px;
  border: 1px solid #9c9c9c;
  border-left: 0;
  border-radius: 0 3px 3px 0;
  line-height: 15px;
}

.side-title span {
  flex: 1;
}

.side-title svg {
  width: 10px;
  height: 12px;
}

.side-button {
  flex: none;
  height: 22px;
  border: 1px solid #a0a0a0;
  border-top-color: #c8c8c8;
  background: linear-gradient(#f4f4f4, #ededed);
  line-height: 18px;
}

.side-tools {
  flex: none;
  display: flex;
  align-items: center;
  gap: 6px;
  height: 28px;
  padding-left: 7px;
  background: linear-gradient(#fbfbfb, #f0f0f0);
}

.side-tools svg {
  width: 16px;
  height: 16px;
}

.tree-box {
  flex: 1;
  min-height: 0;
  margin: 0 1px 2px 2px;
  display: flex;
  flex-direction: column;
  border: 1px solid #828790;
  background: #fff;
}

.tree-main {
  flex: 1;
  min-height: 0;
  display: flex;
}

.tree {
  flex: 1;
  min-width: 0;
  overflow: hidden;
}

.branch {
  display: flex;
  align-items: center;
  height: 16px;
}

.branch span {
  padding-left: 5px;
}

.fold {
  width: 0;
  height: 0;
  margin-right: 8px;
  border: 3px solid transparent;
  border-left-color: #aaa;
  border-right: 0;
  border-left-width: 4px;
}

.fold.open {
  border-width: 0 0 4px 4px;
  border-left-color: transparent;
  border-bottom-color: #333;
}

.leaves {
  margin-left: 1px;
  border-left: 1px dotted #909090;
}

.leaves ul {
  margin-left: 18px;
}

.leaf,
.component {
  display: flex;
  height: 16px;
  border-left: 1px dotted #909090;
}

.leaf::before,
.component::before {
  content: "";
  width: 9px;
  height: 7px;
  border-bottom: 1px dotted #909090;
}

.leaf:last-child,
.component:last-child {
  border-left-color: transparent;
}

.leaf:last-child::before,
.component:last-child::before {
  margin-left: -1px;
  border-left: 1px dotted #909090;
}

.leaf-label {
  display: flex;
  align-items: center;
  gap: 4px;
  padding: 0 4px 0 2px;
}

.leaf-label.active {
  background: #d9d9d9;
}

.vscroll,
.hscroll {
  display: flex;
  background: #f0f0f0;
}

.vscroll {
  flex: none;
  flex-direction: column;
  width: 16px;
  padding-right: 1px;
}

.vscroll svg,
.hscroll svg,
.task-scroll svg {
  width: 16px;
  height: 16px;
  fill: none;
  stroke: #505050;
  stroke-width: 2;
}

.vscroll .before {
  flex: 81;
}

.vscroll .thumb {
  flex: 294;
  background: #cdcdcd;
}

.vscroll .after {
  flex: 63;
}

.hscroll {
  flex: none;
  height: 16px;
  padding-right: 17px;
}

.hscroll .thumb {
  flex: 1;
  margin-left: 10px;
  background: #cdcdcd;
}

.content {
  flex: 1;
  min-width: 0;
  display: flex;
  flex-direction: column;
}

.bar-component {
  flex: none;
  height: 28px;
  overflow: hidden;
  margin-right: 2px;
}

.bar-component .sep {
  margin: 0 2px;
}

.floor,
.floor-box {
  display: flex;
  align-items: center;
  gap: 5px;
}

.floor-box {
  width: 58px;
  height: 22px;
  padding: 0 2px;
  background: #fff;
}

.floor-box select {
  flex: 1;
  min-width: 0;
}

.panels {
  flex: 1;
  min-height: 0;
  display: flex;
  gap: 6px;
}

.component-panel {
  flex: none;
  width: 184px;
  margin-top: 4px;
  display: flex;
  flex-direction: column;
  font-family: var(--song);
}

.search {
  display: flex;
  height: 25px;
  padding: 1px 0 1px 1px;
  background: #fff;
}

.search input {
  flex: 1;
  min-width: 0;
  padding: 0 2px;
  border: 1px solid #7a7a7a;
}

.search input::placeholder {
  color: #6d6d6d;
}

.search button {
  width: 25px;
  display: flex;
  align-items: center;
  justify-content: center;
}

.search button svg {
  width: 16px;
  height: 16px;
}

.component-tree {
  flex: 1;
  border: 1px solid #828790;
  background: #fff;
}

.component-root {
  display: flex;
  align-items: center;
  height: 16px;
  padding-left: 7px;
}

.component-root .chev {
  width: 10px;
  height: 10px;
  margin-right: 6px;
  fill: none;
  stroke: #404040;
  stroke-width: 2;
}

.component-root span {
  padding-left: 5px;
}

.component-tree ul {
  margin-left: 31px;
}

.component-label {
  display: flex;
  align-items: center;
  gap: 6px;
  padding: 0 5px 0 3px;
}

.component-label svg {
  width: 12px;
  height: 12px;
}

.component-label.active {
  background: #316ac5;
  color: #fff;
}

.attr-panel {
  flex: 1;
  min-width: 0;
  margin-right: 3px;
  display: flex;
  flex-direction: column;
  border-bottom: 1px solid #d0d0d0;
  background: #fff;
  font-family: var(--song);
}

.tabs {
  flex: none;
  display: flex;
  height: 20px;
  border-bottom: 1px solid #d9d9d9;
}

.tab {
  height: 21px;
  padding: 0 8px 0 5px;
  border-right: 1px solid #d9d9d9;
  background: #fff;
}

.sheet {
  flex: 1;
  margin: 3px 2px 3px 1px;
  border: 1px solid #a0a0a0;
  overflow: hidden;
}

table {
  border-collapse: collapse;
}

.c-no {
  width: 21px;
}

.c-name {
  width: 191px;
}

.c-value {
  width: 126px;
}

.c-extra {
  width: 48px;
}

th,
td {
  height: 18px;
  padding: 0;
  border: 1px solid #c0c0c0;
  border-width: 0 1px 1px 0;
  line-height: 18px;
  font-weight: 400;
  text-align: left;
}

thead th {
  height: 23px;
  background: linear-gradient(#fcfcfc, #efefef);
  text-align: center;
}

thead .hot {
  background: linear-gradient(#f9d99f, #f1c15f);
  color: #5a005a;
}

thead .extra {
  padding-left: 2px;
  text-align: left;
}

tbody th {
  background: linear-gradient(90deg, #fcfcfc, #f0f0f0);
  text-align: center;
}

.name span {
  margin-left: 20px;
}

.key .name {
  color: #0000f0;
}

.group .name {
  color: #808080;
}

.group .name span {
  margin-left: 5px;
}

.expand {
  width: 13px;
  height: 13px;
  margin-left: 2px;
  border: 1px solid #b0b0b0;
  color: #000;
  font-size: 14px;
  line-height: 10px;
  vertical-align: 1px;
}

.value {
  padding-left: 2px;
}

.rebar {
  display: inline-block;
  width: 12px;
  height: 12px;
  margin-left: 1px;
  vertical-align: -2px;
}

.active th {
  background: #ffd28c;
  color: #5a005a;
}

.active .name {
  background: #0078d7;
  color: #fff;
}

.active .value {
  background: #d9e9f7;
}

/* status bar */
.status {
  flex: none;
  display: flex;
  gap: 2px;
  height: 20px;
  font-family: var(--song);
}

.status span {
  box-sizing: border-box;
  padding-left: 1px;
  border: 1px solid #d4d4d4;
  background: linear-gradient(#fcfcfc, #f0f0f0);
  line-height: 18px;
}

.st-empty {
  width: 148px;
}

.st-height {
  width: 78px;
}

.st-base {
  width: 98px;
}

.st-count {
  width: 48px;
}

.st-msg {
  flex: 1;
}

.st-fps {
  width: 70px;
}

/* taskbar */
.taskbar {
  flex: none;
  display: flex;
  align-items: center;
  height: 40px;
  background: #06161c;
  color: #fff;
}

.taskbar > button {
  height: 40px;
  display: flex;
  align-items: center;
  justify-content: center;
}

.line {
  width: 16px;
  height: 16px;
  fill: none;
  stroke: #fff;
}

.start {
  width: 48px;
}

.start svg {
  width: 16px;
  height: 16px;
}

.cortana {
  box-sizing: border-box;
  width: 344px;
  height: 40px;
  display: flex;
  align-items: center;
  gap: 9px;
  padding: 0 14px 0 9px;
  background: #f0f0f0;
  font-size: 14px;
}

.cortana .ring {
  box-sizing: border-box;
  width: 22px;
  height: 22px;
  border: 3px solid #111;
  border-radius: 50%;
}

.cortana input {
  flex: 1;
  min-width: 0;
}

.cortana input::placeholder {
  color: #444;
}

.cortana svg {
  width: 12px;
  height: 18px;
  fill: none;
  stroke: #333;
}

.task {
  width: 48px;
}

.task.wide {
  width: 52px;
}

.task.wide svg {
  width: 22px;
  height: 22px;
}

.task.wide.bell svg {
  width: 28px;
  height: 28px;
}

.iebox {
  box-sizing: border-box;
  width: 150px;
  height: 30px;
  display: flex;
  align-items: center;
  gap: 4px;
  padding: 0 7px 0 3px;
  border: 1px solid #686868;
  background: #464646;
}

.iebox .ie {
  width: 20px;
  height: 20px;
}

.iebox input {
  flex: 1;
  min-width: 0;
}

.iebox input::placeholder {
  color: #a8a8a8;
}

.iebox .lens {
  width: 18px;
  height: 18px;
  fill: none;
  stroke: #b0b0b0;
}

.app-button {
  position: relative;
  width: 42px;
}

.app-button.active {
  background: #35464c;
}

.app-button svg {
  width: 24px;
  height: 24px;
}

.app-button::after {
  content: "";
  position: absolute;
  left: 4px;
  right: 4px;
  bottom: 0;
  height: 2px;
  background: #76b9ed;
}

.app-button.active::after {
  left: 0;
  right: 0;
}

.task-scroll {
  width: 17px;
  height: 40px;
  display: flex;
  flex-direction: column;
  justify-content: space-between;
  background: #f0f0f0;
}

.cpu,
.clock {
  display: flex;
  flex-direction: column;
  align-items: center;
  gap: 2px;
}

.cpu {
  width: 90px;
}

.tray {
  flex: 1;
  display: flex;
  align-items: center;
  justify-content: flex-end;
  gap: 8px;
}

.people {
  margin-right: 12px;
}

.tray .keys {
  width: 23px;
  height: 14px;
}

.ime {
  padding: 0 2px;
  font-size: 20px;
}

.sogou {
  width: 16px;
  height: 16px;
}

.clock {
  width: 94px;
}

.notify {
  width: 44px;
  padding-right: 10px;
}

/* parameter window */
.dialog {
  position: absolute;
  left: 707px;
  right: 22px;
  top: 94px;
  bottom: 66px;
  z-index: 10;
  box-sizing: border-box;
  display: flex;
  flex-direction: column;
  padding: 0 8px 8px;
  border: 1px solid #4c5058;
  background: linear-gradient(#bfcddb, #d7e4f2 32px);
}

.dialog h2 {
  flex: none;
  margin: 0;
  height: 31px;
  color: #8f979f;
  font-size: 12px;
  font-weight: 400;
  line-height: 37px;
}

.cad {
  flex: 1;
  min-height: 0;
  width: 100%;
  background: #000;
}

.w {
  fill: none;
  stroke: #fff;
  stroke-width: 1;
}

.r {
  fill: none;
  stroke: #f00;
  stroke-width: 3;
}

.c {
  stroke: #0ff;
  stroke-width: 3;
}

.y {
  fill: #ff0;
}

.cad text {
  font-family: "Liberation Serif", "Noto Sans CJK SC", serif;
}

.cad .mono {
  font-family: "Liberation Mono", monospace;
}

.t-white {
  fill: #fff;
  font-weight: 300;
}

.t-green {
  fill: #0f0;
}

.t-cyan {
  fill: #0ff;
}
</style>
